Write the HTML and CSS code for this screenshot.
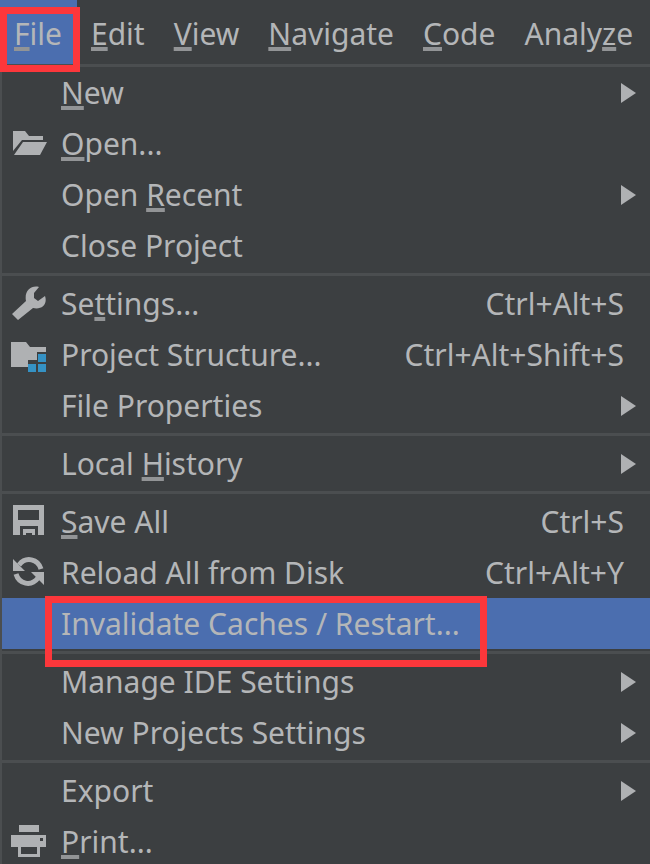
FILE: index.html
```html
<!DOCTYPE html>
<html lang="en">
<head>
    <meta charset="UTF-8">
    <meta name="viewport" content="width=device-width, initial-scale=1.0">
    <title>File menu</title>
    <link rel="stylesheet" href="styles.css">
</head>
<body>
    <nav class="menubar">
        <button class="menubar-item active marked"><u>F</u>ile</button>
        <button class="menubar-item"><u>E</u>dit</button>
        <button class="menubar-item"><u>V</u>iew</button>
        <button class="menubar-item"><u>N</u>avigate</button>
        <button class="menubar-item"><u>C</u>ode</button>
        <button class="menubar-item">Analy<u>z</u>e</button>
    </nav>

    <div class="menu">
        <div class="menu-group">
            <button class="menu-item"><span class="label"><u>N</u>ew</span><span class="arrow"></span></button>
            <button class="menu-item">
                <svg class="icon" viewBox="0 0 36 36"><path d="M2 5h12l4 5h14v4H11L2 25z"/><path d="M12 16h24l-7 13H3z"/></svg>
                <span class="label"><u>O</u>pen...</span>
            </button>
            <button class="menu-item"><span class="label">Open <u>R</u>ecent</span><span class="arrow"></span></button>
            <button class="menu-item"><span class="label">Close Project</span></button>
        </div>

        <div class="menu-group">
            <button class="menu-item">
                <svg class="icon" viewBox="0 0 36 36"><path d="M28 1L23 7v5l4 3 7-5c3 9-4 14-12 12L7 34l-6-6 14-13C13 5 20-1 28 1z"/></svg>
                <span class="label">Se<u>t</u>tings...</span>
                <kbd class="shortcut">Ctrl+Alt+S</kbd>
            </button>
            <button class="menu-item">
                <svg class="icon" viewBox="0 0 36 36"><path d="M0 5h15l4 5h16v5h-9v8h-9v7H0z"/><path class="blue" d="M27 17h8v8h-8zM17 27h8v8h-8zM27 27h8v8h-8z"/></svg>
                <span class="label">Project Structure...</span>
                <kbd class="shortcut">Ctrl+Alt+Shift+S</kbd>
            </button>
            <button class="menu-item"><span class="label">File Properties</span><span class="arrow"></span></button>
        </div>

        <div class="menu-group">
            <button class="menu-item"><span class="label">Local <u>H</u>istory</span><span class="arrow"></span></button>
        </div>

        <div class="menu-group">
            <button class="menu-item">
                <svg class="icon" viewBox="0 0 36 36"><path fill-rule="evenodd" d="M2 1h31v30h-6v-9H9v9H2zM7 6v10h21V6z"/><path d="M12 25h12v6h-3v-2h-6v2h-3z"/></svg>
                <span class="label"><u>S</u>ave All</span>
                <kbd class="shortcut">Ctrl+S</kbd>
            </button>
            <button class="menu-item">
                <svg class="icon" viewBox="0 0 36 36"><path class="stroke" d="M8 10C15 1 27 4 30 14M27 23C20 32 8 29 5 19"/><path d="M2 4v12h12zM33 30V17H20z"/></svg>
                <span class="label">Reload All from Disk</span>
                <kbd class="shortcut">Ctrl+Alt+Y</kbd>
            </button>
            <button class="menu-item active"><span class="label marked">Invalidate Caches / Restart...</span></button>
        </div>

        <div class="menu-group">
            <button class="menu-item"><span class="label">Manage IDE Settings</span><span class="arrow"></span></button>
            <button class="menu-item"><span class="label">New Projects Settings</span><span class="arrow"></span></button>
        </div>

        <div class="menu-group">
            <button class="menu-item"><span class="label">Export</span><span class="arrow"></span></button>
            <button class="menu-item">
                <svg class="icon" viewBox="0 0 36 36"><path d="M8 1h20v7H8z"/><path fill-rule="evenodd" d="M0 11h35v12h-6v10H7V23H0zM10 23v7h16v-7zM29 14v3h3v-3z"/></svg>
                <span class="label"><u>P</u>rint...</span>
            </button>
        </div>
    </div>
</body>
</html>
```
FILE: styles.css
```css
* {
    margin: 0;
    padding: 0;
    box-sizing: border-box;
}

body {
    font-family: "Segoe UI", "Noto Sans", sans-serif;
    font-size: 30px;
    line-height: 40px;
    background: #3c3f41;
    color: #b4b6b8;
    height: 100vh;
    overflow: hidden;
}

button {
    font: inherit;
    color: inherit;
    background: none;
    border: none;
    text-align: left;
}

u {
    text-decoration: underline;
    text-decoration-thickness: 4px;
    text-underline-offset: 2px;
    text-decoration-skip-ink: none;
    text-decoration-color: #929496;
}

.menubar {
    display: flex;
    height: 67px;
    border-bottom: 3px solid #4b4e50;
}

.menubar-item {
    padding: 4px 15px 0 14px;
    white-space: nowrap;
}

.active {
    background: #4b6eaf;
}

.marked {
    position: relative;
}

/* red highlight frames */
.marked::after {
    content: "";
    position: absolute;
    border: 7px solid #fc373b;
}

.menubar-item.marked::after {
    inset: 7px -3px -8px 0;
}

.label.marked::after {
    inset: -8px -27px -23px -16px;
}

.menu {
    border-left: 2px solid #4b4e50;
}

.menu-group + .menu-group::before {
    content: "";
    display: block;
    height: 3px;
    margin: 2px 0;
    background: #4b4e50;
}

.menu-item {
    display: grid;
    grid-template-columns: 40px auto 1fr;
    column-gap: 10px;
    align-items: center;
    width: 100%;
    height: 51px;
    padding: 0 14px 0 9px;
}

.icon {
    width: 36px;
    height: 36px;
    fill: #afb1b3;
}

.icon .blue {
    fill: #3592c4;
}

.icon .stroke {
    fill: none;
    stroke: #afb1b3;
    stroke-width: 5;
}

.label {
    grid-column: 2;
    white-space: nowrap;
}

.shortcut {
    font: inherit;
    justify-self: end;
    padding-right: 12px;
}

.arrow {
    justify-self: end;
    border: 10px solid transparent;
    border-left: 15px solid #afb1b3;
    border-right: 0;
}
```
